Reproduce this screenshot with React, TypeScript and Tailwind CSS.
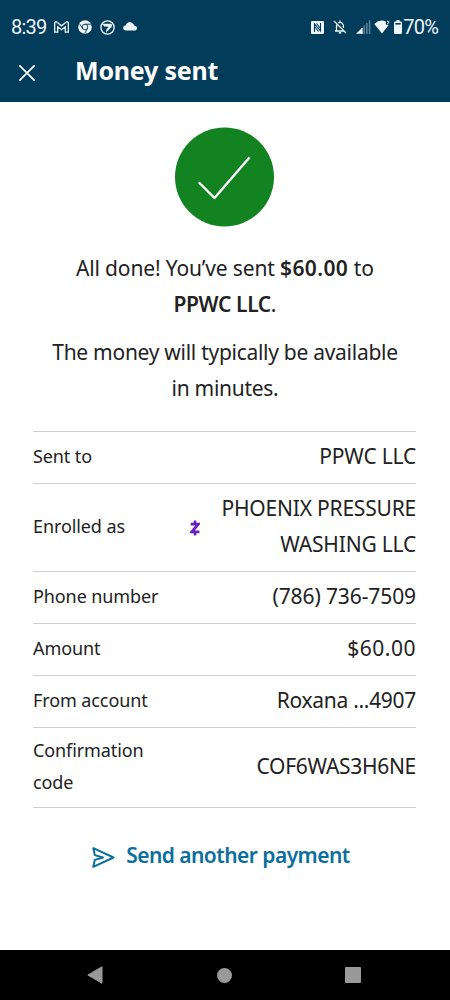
import React from 'react';

const ZelleMark = () => (
  <svg className="mt-[3px]" width="10" height="16" viewBox="0 0 10 16" fill="none" stroke="#6a1fc4" strokeWidth="2.6">
    <path d="M.7 4.2h7.6L1.8 11.8h7.6" strokeWidth="2.8" />
    <path d="M5 .6V4M5 12v3.4" />
  </svg>
);

type Row = {
  label: string;
  value: string;
  spacing?: string;
  zelle?: boolean;
};

const rows: Row[] = [
  { label: 'Sent to', value: 'PPWC LLC' },
  { label: 'Enrolled as', value: 'PHOENIX PRESSURE WASHING LLC', zelle: true },
  { label: 'Phone number', value: '(786) 736-7509', spacing: 'tracking-[-0.1px]' },
  { label: 'Amount', value: '$60.00', spacing: 'tracking-[0.5px]' },
  { label: 'From account', value: 'Roxana ...4907', spacing: 'tracking-[-0.3px]' },
  { label: 'Confirmation code', value: 'COF6WAS3H6NE', spacing: 'tracking-[-0.3px]' },
];

const StatusBar = () => (
  <div className="flex h-[54px] items-center pl-[11px] pr-3 font-['Roboto',sans-serif] text-[20px] text-[#eef5f9]">
    <span className="w-[43px] tracking-[-0.8px]">8:39</span>

    {/* Gmail */}
    <svg width="15" height="12" viewBox="0 0 15 12" fill="none" stroke="currentColor" strokeWidth="1.3">
      <path d="M.7 11.2V1.6Q1.3.3 2.7 1l4.8 3.8L12.3 1q1.4-.7 2 .6v9.6h-3V5.8L7.5 8.7 3.7 5.8v5.4z" />
    </svg>

    {/* Chrome */}
    <svg className="ml-[9px]" width="14" height="14" viewBox="0 0 14 14">
      <circle cx="7" cy="7" r="6.8" fill="currentColor" />
      <circle cx="7" cy="7" r="2.8" fill="none" stroke="#023c5b" strokeWidth=".9" />
      <path d="M7 4.2h6M4.5 8.4 1.5 3.6M9.5 8.4 6.8 13.4" stroke="#023c5b" strokeWidth=".9" fill="none" />
    </svg>

    {/* arrow in a ring */}
    <svg className="ml-2" width="15" height="15" viewBox="0 0 15 15">
      <circle cx="7.5" cy="7.5" r="6.6" fill="none" stroke="currentColor" strokeWidth="1.4" />
      <path d="M2.2 3.8h8.5q2.4.8.8 3.2L6 12.7 6.4 9.4l2.2-2.6-4.4-.4z" fill="currentColor" />
    </svg>

    {/* cloud */}
    <svg className="ml-2 -mt-0.5" width="15" height="10" viewBox="0 0 15 10" fill="currentColor">
      <path d="M2.6 9.4A2.5 2.5 0 0 1 2.7 4.4 4 4 0 0 1 9.8 2.6a3.2 3.2 0 0 1 1.6 2.2 2.4 2.4 0 0 1 1.2 4.6z" />
    </svg>

    {/* NFC */}
    <svg className="ml-auto" width="13" height="13" viewBox="0 0 13 13">
      <rect width="13" height="13" rx="1" fill="currentColor" />
      <path d="M3.5 11V3l6 7V2M3.5 5.5l4 5M5.5 2.5l4 5" fill="none" stroke="#023c5b" strokeWidth="1.1" />
    </svg>

    {/* muted bell */}
    <svg className="ml-[9px]" width="14" height="14" viewBox="0 0 14 14" fill="none" stroke="currentColor" strokeWidth="1.3">
      <path d="M1 1l12 12M2 11h8.6M3.5 11V6q0-1.2.7-2.1M5.3 2.8C9 1.3 10.7 4 10.5 8M7 .5v2" />
      <path d="M5.8 12.8h2.4" strokeWidth="1.6" />
    </svg>

    {/* mobile signal */}
    <svg className="ml-[9px]" width="15" height="14" viewBox="0 0 15 14" stroke="currentColor" strokeWidth="1.7">
      <path d="M0 13.7 5 9v4.7z" fill="currentColor" stroke="none" />
      <path d="M5.8 14V8" />
      <path d="M8.2 14V5.6M10.8 14V3M13.6 14V.3" opacity=".35" />
    </svg>

    {/* wifi */}
    <svg className="ml-[3px]" width="16" height="14" viewBox="0 0 16 14" fill="currentColor">
      <path d="M.3 4Q5.5-1 11.8 1.4v3l3 .6L8 13.6z" />
      <path d="M13 1.2q2.8-.2 1.5 1.7l-1.1 1.2" fill="none" stroke="currentColor" />
    </svg>

    {/* battery */}
    <svg className="ml-[4px]" width="8" height="14" viewBox="0 0 8 14" fill="currentColor">
      <path d="M2.4 0h3.2v1.5H7q1 0 1 1V13q0 1-1 1H1q-1 0-1-1V2.5q0-1 1-1h1.4z" />
      <path d="M1.4 3h5.2v1.6H1.4z" fill="#023c5b" />
    </svg>
    <span className="ml-px tracking-[-0.8px]">70%</span>
  </div>
);

const App: React.FC = () => {
  return (
    <div className="flex h-[1000px] w-[450px] flex-col bg-white font-['Noto_Sans',sans-serif] text-[#222]">
      <header className="h-[102px] bg-[#023c5b]">
        <StatusBar />
        <div className="flex h-[34px] items-center pl-[19px] text-white">
          <svg className="mt-[3px]" width="16" height="16" viewBox="0 0 16 16" fill="none" stroke="currentColor" strokeWidth="1.7" strokeLinecap="round">
            <path d="M.9.9l14.2 14.2M15.1.9.9 15.1" />
          </svg>
          <h1 className="-mt-[3px] ml-10 text-[25px] leading-8 font-bold tracking-[-0.2px]">Money sent</h1>
        </div>
      </header>

      <main className="flex-1 pr-[34px] pl-[33px] pt-[25px]">
        <svg className="mx-auto block" width="100" height="100" viewBox="0 0 100 100">
          <circle cx="49.5" cy="50" r="49.5" fill="#138221" />
          <path d="M24.5 56 39.5 71 74 31" fill="none" stroke="#fff" strokeWidth="2.4" strokeLinecap="round" strokeLinejoin="round" />
        </svg>

        <div className="mt-[23px] pl-px text-center text-[21px] leading-9">
          <p>
            <span className="tracking-[-0.15px]">All done! You’ve sent </span>
            <b className="font-semibold tracking-[0.4px]">$60.00</b> to
            <br />
            <b className="font-semibold tracking-[-0.4px]">PPWC LLC</b>.
          </p>
          <p className="mt-3 tracking-[-0.28px]">
            The money will typically be available
            <br />
            in minutes.
          </p>
        </div>

        {/* Payment details */}
        <dl className="mt-[25px] border-t border-[#cfcfcf]">
          {rows.map((row) => (
            <div key={row.label} className="flex items-center justify-between border-b border-[#cfcfcf] pt-1.5 pb-[9px]">
              <dt className="w-[130px] text-[18px] leading-8 tracking-[-0.1px]">{row.label}</dt>
              <dd className="flex items-center">
                {row.zelle && <ZelleMark />}
                <span className={`max-w-[216px] text-right text-[21px] leading-9 ${row.spacing ?? 'tracking-[-0.2px]'}`}>
                  {row.value}
                </span>
              </dd>
            </div>
          ))}
        </dl>

        <button className="mx-auto mt-[29px] flex items-center pr-2 pl-px text-[21px] leading-9 font-semibold tracking-[-0.55px] text-[#0b6f9e]">
          <svg className="mt-1 mr-[11px]" width="23" height="21" viewBox="0 0 23 21" fill="none" stroke="currentColor" strokeWidth="2" strokeLinecap="round" strokeLinejoin="round">
            <path d="M1.3 1.2 21.5 10.5 1.3 19.8 2.8 12.9 11 10.5 2.8 8.1z" />
          </svg>
          Send another payment
        </button>
      </main>

      <nav className="flex h-[50px] items-center bg-black pl-[87px] text-[#999]">
        <svg width="16" height="18" viewBox="0 0 16 18" fill="currentColor" stroke="currentColor" strokeLinejoin="round">
          <path d="M.8 9 15 .8v16.4z" />
        </svg>
        <span className="ml-[114px] size-[15px] rounded-full bg-current" />
        <span className="ml-[113px] size-4 rounded-[1px] bg-current" />
      </nav>
    </div>
  );
};

export default App;
